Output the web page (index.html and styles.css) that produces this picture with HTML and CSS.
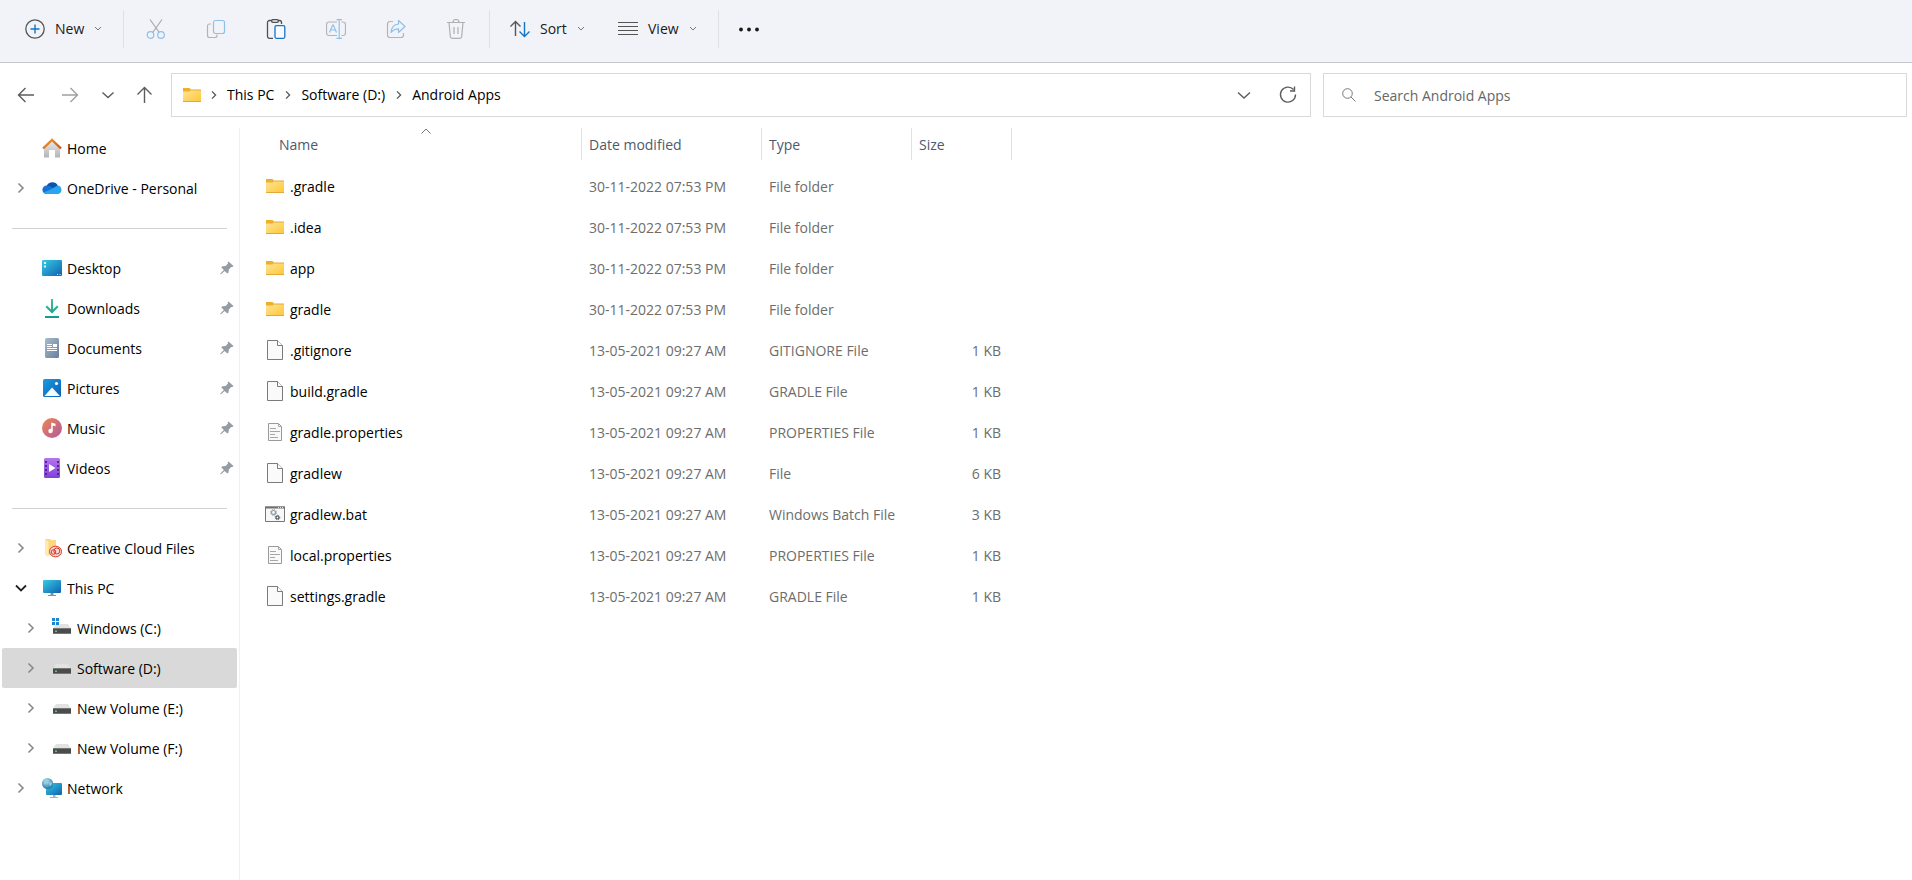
FILE: index.html
```html
<!DOCTYPE html>
<html lang="en">

<head>
    <meta charset="UTF-8">
    <meta name="viewport" content="width=device-width, initial-scale=1.0">
    <title>Android Apps</title>
    <link rel="stylesheet" href="styles.css">
</head>

<body>
    <!-- shared icons -->
    <svg class="defs" aria-hidden="true">
        <defs>
            <linearGradient id="g-folder" x1="0" y1="0" x2="1" y2="1">
                <stop offset="0" stop-color="#ffe59a" />
                <stop offset="1" stop-color="#fdc633" />
            </linearGradient>
            <linearGradient id="g-roof" x1="0" y1="0" x2="1" y2="1">
                <stop offset="0" stop-color="#f0a030" />
                <stop offset="1" stop-color="#c94f1c" />
            </linearGradient>
            <linearGradient id="g-wall" x1="0" y1="0" x2="0" y2="1">
                <stop offset="0" stop-color="#ececec" />
                <stop offset="1" stop-color="#b4b4b6" />
            </linearGradient>
            <linearGradient id="g-screen" x1="0" y1="0" x2="1" y2="1">
                <stop offset="0" stop-color="#36cbe4" />
                <stop offset="1" stop-color="#0f62b0" />
            </linearGradient>
            <linearGradient id="g-down" x1="0" y1="0" x2="0" y2="1">
                <stop offset="0" stop-color="#3fc295" />
                <stop offset="1" stop-color="#109a92" />
            </linearGradient>
            <linearGradient id="g-doc" x1="0" y1="0" x2="1" y2="1">
                <stop offset="0" stop-color="#a9bacb" />
                <stop offset="1" stop-color="#687f9c" />
            </linearGradient>
            <linearGradient id="g-pic" x1="0" y1="0" x2="1" y2="1">
                <stop offset="0" stop-color="#1a9be2" />
                <stop offset="1" stop-color="#0a5fb4" />
            </linearGradient>
            <linearGradient id="g-music" x1="0" y1="0" x2="1" y2="1">
                <stop offset="0" stop-color="#ee8650" />
                <stop offset="1" stop-color="#b05aa0" />
            </linearGradient>
            <linearGradient id="g-video" x1="0" y1="0" x2="0" y2="1">
                <stop offset="0" stop-color="#b477ee" />
                <stop offset="1" stop-color="#8140d8" />
            </linearGradient>
            <radialGradient id="g-globe" cx=".4" cy=".3" r=".7">
                <stop offset="0" stop-color="#c4e4ee" />
                <stop offset="1" stop-color="#1c7aa8" />
            </radialGradient>
        </defs>
        <symbol id="i-right" viewBox="0 0 20 20">
            <path d="M7.5 5.5 12 10l-4.500 4.500" fill="none" stroke="currentColor" stroke-width="1.600" />
        </symbol>
        <symbol id="i-down" viewBox="0 0 20 20">
            <path d="M5 7.500 10 12.500 15 7.500" fill="none" stroke="currentColor" stroke-width="1.800" />
        </symbol>
        <symbol id="i-pin" viewBox="0 0 14 14">
            <path d="M8.500.500 13.500 5l-1 1-1.200-.1-2.500 2.600-.3 3-1.200 1L4.700 9.900 1 13.300H.4v-.7L3.900 9 1.300 6.500l1-1.200 3.200-.3L8 2.500 7.700 1.300z" fill="#949da5" />
        </symbol>
        <symbol id="i-folder" viewBox="0 0 20 20">
            <path d="M1 3h6.500L9 4.500V8H1z" fill="#eeb02a" />
            <path d="M1 6.500h6.500L9 5h10v12H1z" fill="url(#g-folder)" />
            <path d="M8.500 5H19M1 16.500h18" stroke="#e2a93a" />
        </symbol>
        <symbol id="i-file" viewBox="0 0 20 20">
            <path d="M2.500.500h10l5 5v14h-15z" fill="#fafafa" stroke="#7b7b7b" />
            <path d="M12.500.500v5h5" fill="#fff" stroke="#7b7b7b" />
        </symbol>
        <symbol id="i-text" viewBox="0 0 20 20">
            <path d="M3.500 1.500h10l3 3v14h-13z" fill="#f9f9f9" stroke="#9a9a9a" />
            <path d="M13.500 1.500v3h3M5 6.500h6M5 9.500h10M5 12.500h5M5 15.500h8" fill="none" stroke="#a3a8ac" />
        </symbol>
        <symbol id="i-bat" viewBox="0 0 20 20">
            <path d="M.5 3h19v14.500H.5z" fill="#f8f8f8" stroke="#777" />
            <path d="M0 3.500h20" stroke="#707070" stroke-width="2" />
            <path d="M13 3.500h5" stroke="#ddd" stroke-dasharray="1 1" />
            <circle cx="8.500" cy="8.500" r="2" fill="none" stroke="#8f9ca6" stroke-width="1.200" />
            <circle cx="8.500" cy="8.500" r="3" fill="none" stroke="#8f9ca6" stroke-dasharray="1.200 1.156" />
            <circle cx="12.500" cy="13.500" r="1.500" fill="none" stroke="#4f575e" stroke-width="1.200" />
            <circle cx="12.500" cy="13.500" r="2.300" fill="none" stroke="#4f575e" stroke-dasharray=".9 .906" />
        </symbol>
        <symbol id="i-drive" viewBox="0 0 20 20">
            <path d="M4 6h12l3 5H1z" fill="#e2e2e2" />
            <path d="M1 10.500h18V16H1z" fill="#4a4c4b" />
            <path d="M1 10.500h18M1 15.500h18" stroke="#777" />
            <path d="M3 12.500h2v1.500H3z" fill="#4ad05c" />
        </symbol>
    </svg>

    <header class="toolbar">
        <button class="tool tool-new">
            <svg class="icon" viewBox="0 0 20 20" fill="none">
                <circle cx="10" cy="10" r="9.200" stroke="#555" stroke-width="1.300" />
                <path d="M10 5.500v9M5.500 10h9" stroke="#1574c4" stroke-width="1.400" />
            </svg>
            <span>New</span>
            <svg class="caret" viewBox="0 0 8 8"><path d="M1 2l3 3 3-3" /></svg>
        </button>
        <div class="group">
            <button class="tool-icon" aria-label="Cut" disabled>
                <svg class="icon" viewBox="0 0 20 20" fill="none" stroke-width="1.200">
                    <path d="M4 .500 13.300 13.500M16 .500 6.700 13.500" stroke="#a9a9ab" />
                    <circle cx="4.500" cy="16" r="3.300" stroke="#8fc0e8" />
                    <circle cx="15" cy="16" r="3.300" stroke="#8fc0e8" />
                </svg>
            </button>
            <button class="tool-icon" aria-label="Copy" disabled>
                <svg class="icon" viewBox="0 0 20 20" fill="none" stroke-width="1.200">
                    <path d="M5 5H3.500a2 2 0 0 0-2 2v9.500a2 2 0 0 0 2 2H9a2 2 0 0 0 2-2v-1" stroke="#b4b4b7" />
                    <rect x="7.500" y="1.500" width="11" height="13" rx="2" stroke="#8fc0e8" />
                </svg>
            </button>
            <button class="tool-icon" aria-label="Paste">
                <svg class="icon" viewBox="0 0 20 20" fill="none" stroke-width="1.300">
                    <path d="M7 19.300H3.500a2 2 0 0 1-2-2V3.500a2 2 0 0 1 2-2h2.200M12.300 1.500h1.200a2 2 0 0 1 2 2V5" stroke="#4f4f4f" />
                    <rect x="5.600" y=".6" width="6.800" height="2.800" rx="1.400" stroke="#4f4f4f" />
                    <rect x="9" y="6.600" width="9.800" height="12.700" rx="1.500" fill="#f7fbff" stroke="#1574c4" />
                </svg>
            </button>
            <button class="tool-icon" aria-label="Rename" disabled>
                <svg class="icon" viewBox="0 0 20 20" fill="none" stroke-width="1.200">
                    <path d="M11 3H3a2.500 2.500 0 0 0-2.500 2.500v8.500A2.500 2.500 0 0 0 3 16.500h8M15.500 3H17a2.500 2.500 0 0 1 2.500 2.500v8.500a2.500 2.500 0 0 1-2.500 2.500h-1.500" stroke="#b4b4b7" />
                    <path d="M3.500 13.500 6.700 6h.6l3.200 7.500M4.700 11h4.600M10.500.600h5.500M10.500 19.400h5.500M13.200.600v18.800" stroke="#8fc0e8" />
                </svg>
            </button>
            <button class="tool-icon" aria-label="Share" disabled>
                <svg class="icon" viewBox="0 0 20 20" fill="none" stroke-width="1.200">
                    <path d="M7 2.500H4A2.500 2.500 0 0 0 1.500 5v11A2.500 2.500 0 0 0 4 18.500h11a2.500 2.500 0 0 0 2.500-2.500v-2" stroke="#b4b4b7" />
                    <path d="M12.500 1.500v3.500C8 5.300 5.500 8.500 5 13.500c2-2.500 4.500-3.700 7.500-3.700v3.700l6.500-6z" stroke="#8fc0e8" stroke-linejoin="round" />
                </svg>
            </button>
            <button class="tool-icon" aria-label="Delete" disabled>
                <svg class="icon" viewBox="0 0 20 20" fill="none" stroke="#b0b0b3" stroke-width="1.200">
                    <path d="M1 3.500h18M7 3.500a3 3 0 0 1 6 0M3 3.500l1.300 14a2 2 0 0 0 2 1.900h7.400a2 2 0 0 0 2-1.900L17 3.500M8 8v7M12 8v7" />
                </svg>
            </button>
        </div>
        <button class="tool tool-sort">
            <svg class="icon" viewBox="0 0 20 20" fill="none" stroke-width="1.400">
                <path d="M5.500 17V3M.5 7.500l5-5 5 5" stroke="#555" />
                <path d="M14.500 3v14M9.500 12.500l5 5 5-5" stroke="#1574c4" />
            </svg>
            <span>Sort</span>
            <svg class="caret" viewBox="0 0 8 8"><path d="M1 2l3 3 3-3" /></svg>
        </button>
        <button class="tool tool-view">
            <svg class="icon" viewBox="0 0 20 20" stroke="#555">
                <path d="M0 3.500h20M0 7.500h20M0 11.500h20M0 15.500h20" />
            </svg>
            <span>View</span>
            <svg class="caret" viewBox="0 0 8 8"><path d="M1 2l3 3 3-3" /></svg>
        </button>
        <button class="tool tool-more" aria-label="See more">
            <svg class="icon" viewBox="0 0 20 20" fill="#1a1a1a">
                <circle cx="2" cy="10.500" r="1.900" />
                <circle cx="10" cy="10.500" r="1.900" />
                <circle cx="18" cy="10.500" r="1.900" />
            </svg>
        </button>
    </header>

    <div class="navbar">
        <div class="nav-buttons">
            <button class="nav-btn" aria-label="Back">
                <svg class="icon" viewBox="0 0 20 20"><path d="M18 10H2.500M9.500 3 2.500 10l7 7" /></svg>
            </button>
            <button class="nav-btn forward" aria-label="Forward" disabled>
                <svg class="icon" viewBox="0 0 20 20"><path d="M2 10h15.500M10.500 3l7 7-7 7" /></svg>
            </button>
            <button class="nav-btn recent" aria-label="Recent locations">
                <svg class="icon" viewBox="0 0 20 20"><path d="M4.500 7.500 10 12.500l5.500-5" /></svg>
            </button>
            <button class="nav-btn up" aria-label="Up">
                <svg class="icon" viewBox="0 0 20 20"><path d="M10.500 18V2.500M3.500 9.500l7-7 7 7" /></svg>
            </button>
        </div>
        <nav class="address" aria-label="Address">
            <svg class="icon"><use href="#i-folder" /></svg>
            <svg class="crumb-sep"><use href="#i-right" /></svg>
            <a href="#">This PC</a>
            <svg class="crumb-sep"><use href="#i-right" /></svg>
            <a href="#">Software (D:)</a>
            <svg class="crumb-sep"><use href="#i-right" /></svg>
            <a href="#">Android Apps</a>
            <div class="address-end">
                <button class="nav-btn" aria-label="Previous locations">
                    <svg class="icon" viewBox="0 0 20 20"><path d="M4 7.500l6 5.500 6-5.500" /></svg>
                </button>
                <button class="nav-btn" aria-label="Refresh">
                    <svg class="icon" viewBox="0 0 20 20"><path d="M15.500 4.500A7.500 7.500 0 1 0 17.500 9.500M16.500 1.500v4.500H12" /></svg>
                </button>
            </div>
        </nav>
        <label class="search">
            <svg class="search-icon" viewBox="0 0 14 14">
                <circle cx="5.500" cy="5.500" r="4.800" />
                <path d="M9 9l4.500 4.500" />
            </svg>
            <input type="text" placeholder="Search Android Apps" aria-label="Search Android Apps">
        </label>
    </div>

    <main class="main">
        <nav class="sidebar" aria-label="Folders">
            <ul>
                <li><a class="item" href="#">
                    <span class="arrow"></span>
                    <svg class="icon" viewBox="0 0 20 20">
                        <path d="M2 9l8-7 8 7v10.500h-5V12H7v7.500H2z" fill="url(#g-wall)" />
                        <path d="M1 10.500 10 2l9 8.500" fill="none" stroke="url(#g-roof)" stroke-width="2.400" />
                    </svg>
                    <span class="label">Home</span>
                </a></li>
                <li><a class="item" href="#">
                    <svg class="arrow"><use href="#i-right" /></svg>
                    <svg class="icon" viewBox="0 0 20 20">
                        <path d="M4.500 8.500A6.200 6.200 0 0 1 15.800 7.500L12 12 5 14z" fill="#0a55b0" />
                        <path d="M4.500 16A4.200 4.200 0 0 1 4.800 7.500 5 5 0 0 1 8.500 8.500L14 12z" fill="#1273d2" />
                        <path d="M8.500 11.500 15.500 7.500a4.300 4.300 0 0 1 .5 8.500H4.500a4 4 0 0 1-2.900-1.500z" fill="#29a4ee" />
                    </svg>
                    <span class="label">OneDrive - Personal</span>
                </a></li>
            </ul>
            <hr class="divider">
            <ul>
                <li><a class="item" href="#">
                    <span class="arrow"></span>
                    <svg class="icon" viewBox="0 0 20 20">
                        <rect y="2" width="20" height="16" rx="1" fill="url(#g-screen)" />
                        <path d="M2 4h2v2H2zM2 7.500h2v2H2zM15 16h1v1h-1zM17.500 16h1v1h-1z" fill="#d9f6fb" />
                    </svg>
                    <span class="label">Desktop</span>
                    <svg class="pin"><use href="#i-pin" /></svg>
                </a></li>
                <li><a class="item" href="#">
                    <span class="arrow"></span>
                    <svg class="icon" viewBox="0 0 20 20">
                        <path d="M9 1h2v10.500l4-4 1.500 1.500L10 15.500 3.500 9 5 7.500l4 4zM3 18h14v2H3z" fill="url(#g-down)" />
                    </svg>
                    <span class="label">Downloads</span>
                    <svg class="pin"><use href="#i-pin" /></svg>
                </a></li>
                <li><a class="item" href="#">
                    <span class="arrow"></span>
                    <svg class="icon" viewBox="0 0 20 20">
                        <rect x="3" width="14" height="20" rx="1.500" fill="url(#g-doc)" />
                        <path d="M5 6.500h5M5 8.500h5M5 10.500h10M5 12.500h10" stroke="#fff" />
                        <path d="M11 6h4v3h-4z" fill="#fff" />
                    </svg>
                    <span class="label">Documents</span>
                    <svg class="pin"><use href="#i-pin" /></svg>
                </a></li>
                <li><a class="item" href="#">
                    <span class="arrow"></span>
                    <svg class="icon" viewBox="0 0 20 20">
                        <rect x="1" y="1" width="18" height="18" rx="1.500" fill="url(#g-pic)" />
                        <path d="M2.500 18 10 9.500l8 8.500z" fill="#f2f9ff" />
                        <circle cx="14.500" cy="5.500" r="1.600" fill="#fff" />
                    </svg>
                    <span class="label">Pictures</span>
                    <svg class="pin"><use href="#i-pin" /></svg>
                </a></li>
                <li><a class="item" href="#">
                    <span class="arrow"></span>
                    <svg class="icon" viewBox="0 0 20 20">
                        <circle cx="10" cy="10" r="10" fill="url(#g-music)" />
                        <circle cx="8.500" cy="13" r="2.200" fill="#fff" />
                        <path d="M9.200 13V4.500l4.300 1.200v2.600l-2.800-.8V13z" fill="#fff" />
                    </svg>
                    <span class="label">Music</span>
                    <svg class="pin"><use href="#i-pin" /></svg>
                </a></li>
                <li><a class="item" href="#">
                    <span class="arrow"></span>
                    <svg class="icon" viewBox="0 0 20 20">
                        <rect x="2" width="16" height="20" rx="1.500" fill="url(#g-video)" />
                        <path d="M4 3v15M16 3v15" stroke="#5a2394" stroke-width="2" stroke-dasharray="2 2" />
                        <path d="M7 6l6.500 4L7 14z" fill="#fff" />
                    </svg>
                    <span class="label">Videos</span>
                    <svg class="pin"><use href="#i-pin" /></svg>
                </a></li>
            </ul>
            <hr class="divider">
            <ul>
                <li><a class="item" href="#">
                    <svg class="arrow"><use href="#i-right" /></svg>
                    <svg class="icon" viewBox="0 0 20 20">
                        <path d="M3 1h5l1 1h5v15H3z" fill="#fbd87c" />
                        <path d="M3 1l3.500 3v15L3 17z" fill="#ffeab0" />
                        <ellipse cx="13.500" cy="13.500" rx="6.500" ry="5.800" fill="#f7dcd4" />
                        <ellipse cx="13.500" cy="13.500" rx="6" ry="5.300" fill="none" stroke="#d8362a" />
                        <circle cx="11.500" cy="14" r="2.300" fill="none" stroke="#d8362a" />
                        <circle cx="14.800" cy="13" r="3" fill="none" stroke="#d8362a" />
                    </svg>
                    <span class="label">Creative Cloud Files</span>
                </a></li>
                <li><a class="item" href="#">
                    <svg class="arrow open"><use href="#i-down" /></svg>
                    <svg class="icon" viewBox="0 0 20 20">
                        <rect x="1" y="2" width="18" height="13" rx="1" fill="url(#g-screen)" />
                        <path d="M8.500 15h3v2H14v1H6v-1h2.500z" fill="#7d93a5" />
                    </svg>
                    <span class="label">This PC</span>
                </a>
                    <ul class="drives">
                        <li><a class="item" href="#">
                            <svg class="arrow"><use href="#i-right" /></svg>
                            <svg class="icon" viewBox="0 0 20 20">
                                <use href="#i-drive" />
                                <path d="M-1 0h8.500v7H-1z" fill="#fff" />
                                <path d="M0 0h3v3H0zM4 0h3v3H4zM0 4h3v3H0zM4 4h3v3H4z" fill="#1a86d0" />
                            </svg>
                            <span class="label">Windows (C:)</span>
                        </a></li>
                        <li><a class="item selected" href="#" aria-current="true">
                            <svg class="arrow"><use href="#i-right" /></svg>
                            <svg class="icon"><use href="#i-drive" /></svg>
                            <span class="label">Software (D:)</span>
                        </a></li>
                        <li><a class="item" href="#">
                            <svg class="arrow"><use href="#i-right" /></svg>
                            <svg class="icon"><use href="#i-drive" /></svg>
                            <span class="label">New Volume (E:)</span>
                        </a></li>
                        <li><a class="item" href="#">
                            <svg class="arrow"><use href="#i-right" /></svg>
                            <svg class="icon"><use href="#i-drive" /></svg>
                            <span class="label">New Volume (F:)</span>
                        </a></li>
                    </ul>
                </li>
                <li><a class="item" href="#">
                    <svg class="arrow"><use href="#i-right" /></svg>
                    <svg class="icon" viewBox="0 0 20 20">
                        <rect x="4" y="5" width="16" height="12" rx="1" fill="url(#g-screen)" />
                        <path d="M11 17h2.500v2H16v1H8v-1h3z" fill="#9fb4c8" />
                        <circle cx="5.500" cy="5.500" r="5.500" fill="url(#g-globe)" />
                        <path d="M2 2.500l3-1 1 2-2 2.500-2-.5zM7 5l2.500-1 .5 2-2 2.500z" fill="#8ed0e4" />
                    </svg>
                    <span class="label">Network</span>
                </a></li>
            </ul>
        </nav>

        <section class="files">
            <table class="file-table">
                <thead>
                    <tr>
                        <th class="col-name" aria-sort="ascending">
                            <div class="head">Name</div>
                            <svg class="sort-mark" viewBox="0 0 10 6"><path d="M.5 5.500 5 1l4.500 4.500" /></svg>
                        </th>
                        <th class="col-date"><div class="head">Date modified</div></th>
                        <th class="col-type"><div class="head">Type</div></th>
                        <th class="col-size"><div class="head">Size</div></th>
                    </tr>
                </thead>
                <tbody>
                    <tr>
                        <td><div class="name"><svg class="icon"><use href="#i-folder" /></svg>.gradle</div></td>
                        <td>30-11-2022 07:53 PM</td>
                        <td>File folder</td>
                        <td class="size"></td>
                    </tr>
                    <tr>
                        <td><div class="name"><svg class="icon"><use href="#i-folder" /></svg>.idea</div></td>
                        <td>30-11-2022 07:53 PM</td>
                        <td>File folder</td>
                        <td class="size"></td>
                    </tr>
                    <tr>
                        <td><div class="name"><svg class="icon"><use href="#i-folder" /></svg>app</div></td>
                        <td>30-11-2022 07:53 PM</td>
                        <td>File folder</td>
                        <td class="size"></td>
                    </tr>
                    <tr>
                        <td><div class="name"><svg class="icon"><use href="#i-folder" /></svg>gradle</div></td>
                        <td>30-11-2022 07:53 PM</td>
                        <td>File folder</td>
                        <td class="size"></td>
                    </tr>
                    <tr>
                        <td><div class="name"><svg class="icon"><use href="#i-file" /></svg>.gitignore</div></td>
                        <td>13-05-2021 09:27 AM</td>
                        <td>GITIGNORE File</td>
                        <td class="size">1 KB</td>
                    </tr>
                    <tr>
                        <td><div class="name"><svg class="icon"><use href="#i-file" /></svg>build.gradle</div></td>
                        <td>13-05-2021 09:27 AM</td>
                        <td>GRADLE File</td>
                        <td class="size">1 KB</td>
                    </tr>
                    <tr>
                        <td><div class="name"><svg class="icon"><use href="#i-text" /></svg>gradle.properties</div></td>
                        <td>13-05-2021 09:27 AM</td>
                        <td>PROPERTIES File</td>
                        <td class="size">1 KB</td>
                    </tr>
                    <tr>
                        <td><div class="name"><svg class="icon"><use href="#i-file" /></svg>gradlew</div></td>
                        <td>13-05-2021 09:27 AM</td>
                        <td>File</td>
                        <td class="size">6 KB</td>
                    </tr>
                    <tr>
                        <td><div class="name"><svg class="icon"><use href="#i-bat" /></svg>gradlew.bat</div></td>
                        <td>13-05-2021 09:27 AM</td>
                        <td>Windows Batch File</td>
                        <td class="size">3 KB</td>
                    </tr>
                    <tr>
                        <td><div class="name"><svg class="icon"><use href="#i-text" /></svg>local.properties</div></td>
                        <td>13-05-2021 09:27 AM</td>
                        <td>PROPERTIES File</td>
                        <td class="size">1 KB</td>
                    </tr>
                    <tr>
                        <td><div class="name"><svg class="icon"><use href="#i-file" /></svg>settings.gradle</div></td>
                        <td>13-05-2021 09:27 AM</td>
                        <td>GRADLE File</td>
                        <td class="size">1 KB</td>
                    </tr>
                </tbody>
            </table>
        </section>
    </main>
</body>

</html>
```

FILE: styles.css
```css
* {
    margin: 0;
    padding: 0;
    box-sizing: border-box;
    list-style: none;
}

body {
    display: flex;
    flex-direction: column;
    min-height: 100vh;
    background-color: #fff;
    color: #000;
    font: 14px/20px "Open Sans", "Noto Sans", sans-serif;
}

a {
    color: inherit;
    text-decoration: none;
}

button,
input {
    border: none;
    background: none;
    color: inherit;
    font: inherit;
}

svg {
    flex: none;
}

.defs {
    position: absolute;
    width: 0;
    height: 0;
}

.icon {
    display: block;
    width: 20px;
    height: 20px;
}

/* toolbar */
.toolbar {
    display: flex;
    padding: 10px 0 14px;
    background-color: #f2f3f8;
    border-bottom: 1px solid #c5c7cf;
}

.tool {
    display: flex;
    align-items: center;
    height: 38px;
    padding-left: 20px;
    gap: 10px;
    color: #1a1a1a;
}

.tool-new {
    width: 123px;
    padding-left: 25px;
}

.tool-sort {
    width: 108px;
}

.tool-view {
    width: 120px;
}

.tool-more {
    border-left: 1px solid #dfe0e6;
}

.caret {
    width: 8px;
    height: 8px;
    fill: none;
    stroke: #777;
}

.group {
    display: flex;
    gap: 20px;
    padding: 0 13px 0 12px;
    border-left: 1px solid #dfe0e6;
    border-right: 1px solid #dfe0e6;
}

.tool-icon {
    display: flex;
    align-items: center;
    justify-content: center;
    width: 40px;
    height: 38px;
}

/* address row */
.navbar {
    display: flex;
    padding: 10px 5px 11px 4px;
}

.nav-buttons {
    display: flex;
    margin-right: 7px;
}

.nav-btn {
    display: flex;
    align-items: center;
    justify-content: center;
    width: 44px;
    height: 44px;
}

.nav-btn .icon {
    fill: none;
    stroke: #5c5c5c;
    stroke-width: 1.4;
}

.forward .icon {
    stroke: #a0a0a0;
}

.recent {
    width: 32px;
}

.up {
    width: 40px;
}

.address,
.search {
    display: flex;
    align-items: center;
    height: 44px;
    border: 1px solid #d9d9d9;
}

.address {
    flex: 2 1 0;
    padding-left: 10px;
    margin-right: 12px;
}

.crumb-sep {
    width: 16px;
    height: 16px;
    margin: 0 5px 0 6px;
    color: #555;
}

.address .icon + .crumb-sep {
    margin-left: 4px;
}

.address-end {
    display: flex;
    margin-left: auto;
}

.search {
    flex: 1 1 0;
    padding-left: 18px;
    gap: 18px;
}

.search-icon {
    width: 14px;
    height: 14px;
    fill: none;
    stroke: #777;
}

.search input {
    flex: 1;
    min-width: 0;
    height: 42px;
    outline: none;
}

.search input::placeholder {
    color: #666;
    opacity: 1;
}

/* sidebar */
.main {
    display: flex;
    flex: 1;
}

.sidebar {
    flex: none;
    width: 240px;
    padding: 0 2px;
    border-right: 1px solid #f0f0f0;
}

.item {
    display: flex;
    align-items: center;
    height: 40px;
    padding: 0 3px 0 9px;
    border-radius: 2px;
}

.item .icon {
    margin: 0 5px 0 11px;
}

.label {
    padding-top: 2px;
}

.item .pin {
    width: 14px;
    height: 14px;
    margin-left: auto;
}

.drives .item {
    padding-left: 19px;
}

.selected {
    background-color: #d9d9d9;
}

.arrow {
    width: 20px;
    height: 20px;
    color: #8a8a8a;
}

.arrow.open {
    color: #222;
}

.divider {
    height: 1px;
    margin: 20px 10px 19px;
    border: none;
    background-color: #d2d2d2;
}

/* file list */
.files {
    flex: 1;
}

.file-table {
    table-layout: fixed;
    width: 772px;
    border-collapse: collapse;
}

.file-table th {
    position: relative;
    height: 38px;
    color: #4c5a6e;
    font-weight: 400;
    text-align: left;
    vertical-align: top;
}

.head {
    height: 32px;
    padding: 7px 7px 5px;
    border-right: 1px solid #e1e1e4;
}

.col-name {
    width: 342px;
}

.col-date {
    width: 180px;
}

.col-type {
    width: 150px;
}

.col-size {
    width: 100px;
}

.col-name .head {
    padding-left: 39px;
}

.sort-mark {
    position: absolute;
    left: 181px;
    top: 0;
    width: 10px;
    height: 6px;
    fill: none;
    stroke: #777;
}

.file-table td {
    height: 41px;
    padding: 0 7px;
    color: #6d6d6d;
    white-space: nowrap;
}

.file-table .size {
    padding-right: 11px;
    text-align: right;
}

.name {
    display: flex;
    align-items: center;
    gap: 5px;
    padding-left: 18px;
    color: #000;
}

.name .icon {
    margin-bottom: 2px;
}
```
